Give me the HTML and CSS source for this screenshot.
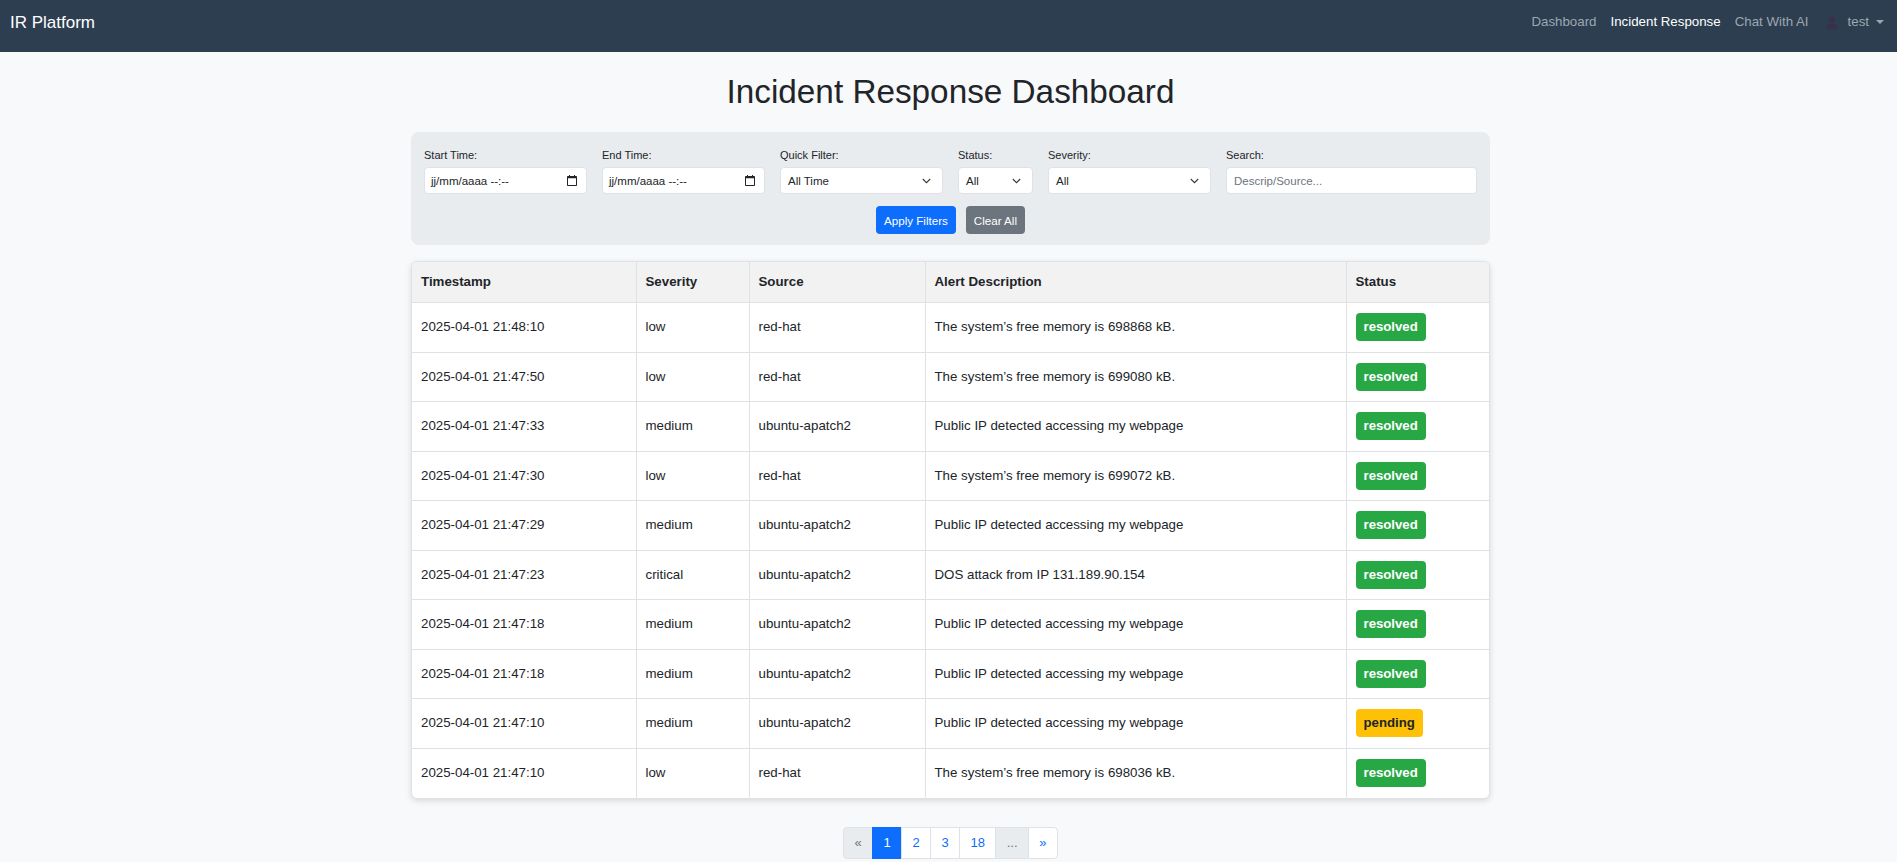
FILE: index.html
```html
<!DOCTYPE html>
<html lang="en">
<head>
<meta charset="utf-8">
<title>Incident Response Dashboard</title>
<link rel="stylesheet" href="styles.css">
</head>
<body>
<nav class="navbar">
  <a class="brand" href="#">IR Platform</a>
  <ul class="nav-links">
    <li><a class="nav-link" href="#">Dashboard</a></li>
    <li><a class="nav-link active" href="#">Incident Response</a></li>
    <li><a class="nav-link" href="#">Chat With AI</a></li>
    <li class="user">
      <svg class="user-icon" width="10" height="13" viewBox="0 0 10 13"><circle cx="5" cy="3.3" r="3.1" fill="#3a2f4d"/><path d="M0 13v-1.6C0 8.9 2 7.4 5 7.4s5 1.5 5 4V13z" fill="#3a2f4d"/></svg>
      <span class="user-name">test</span><span class="caret"></span>
    </li>
  </ul>
</nav>
<div class="page">
  <main class="container">
    <h1 class="title">Incident Response Dashboard</h1>
    <section class="filters">
      <div class="filter-row">
        <div class="field w-std">
          <label>Start Time:</label>
          <div class="control"><span>jj/mm/aaaa --:--</span><svg class="cal" width="10" height="11" viewBox="0 0 10 11"><path d="M2 0h1v1h4V0h1v1h1.2c.4 0 .8.4.8.8v8.4c0 .4-.4.8-.8.8H.8c-.4 0-.8-.4-.8-.8V1.8C0 1.4.4 1 .8 1H2zM1 3.3v6.7h8V3.3z" fill="#212529"/></svg></div>
        </div>
        <div class="field w-std">
          <label>End Time:</label>
          <div class="control"><span>jj/mm/aaaa --:--</span><svg class="cal" width="10" height="11" viewBox="0 0 10 11"><path d="M2 0h1v1h4V0h1v1h1.2c.4 0 .8.4.8.8v8.4c0 .4-.4.8-.8.8H.8c-.4 0-.8-.4-.8-.8V1.8C0 1.4.4 1 .8 1H2zM1 3.3v6.7h8V3.3z" fill="#212529"/></svg></div>
        </div>
        <div class="field w-std">
          <label>Quick Filter:</label>
          <div class="control select"><span>All Time</span><svg class="chev" width="9" height="6" viewBox="0 0 9 6"><path d="M.8 1l3.7 3.7L8.2 1" fill="none" stroke="#343a40" stroke-width="1.1"/></svg></div>
        </div>
        <div class="field w-status">
          <label>Status:</label>
          <div class="control select"><span>All</span><svg class="chev" width="9" height="6" viewBox="0 0 9 6"><path d="M.8 1l3.7 3.7L8.2 1" fill="none" stroke="#343a40" stroke-width="1.1"/></svg></div>
        </div>
        <div class="field w-std">
          <label>Severity:</label>
          <div class="control select"><span>All</span><svg class="chev" width="9" height="6" viewBox="0 0 9 6"><path d="M.8 1l3.7 3.7L8.2 1" fill="none" stroke="#343a40" stroke-width="1.1"/></svg></div>
        </div>
        <div class="field w-grow">
          <label>Search:</label>
          <div class="control"><span class="placeholder">Descrip/Source...</span></div>
        </div>
      </div>
      <div class="actions">
        <button class="btn btn-primary" type="button">Apply Filters</button>
        <button class="btn btn-secondary" type="button">Clear All</button>
      </div>
    </section>

    <div class="table-card">
      <table class="alerts">
        <colgroup>
          <col class="c-time"><col class="c-sev"><col class="c-src"><col class="c-desc"><col class="c-status">
        </colgroup>
        <thead>
          <tr><th>Timestamp</th><th>Severity</th><th>Source</th><th>Alert Description</th><th>Status</th></tr>
        </thead>
        <tbody>
          <tr><td>2025-04-01 21:48:10</td><td>low</td><td>red-hat</td><td>The system’s free memory is 698868 kB.</td><td><span class="badge resolved">resolved</span></td></tr>
          <tr><td>2025-04-01 21:47:50</td><td>low</td><td>red-hat</td><td>The system’s free memory is 699080 kB.</td><td><span class="badge resolved">resolved</span></td></tr>
          <tr><td>2025-04-01 21:47:33</td><td>medium</td><td>ubuntu-apatch2</td><td>Public IP detected accessing my webpage</td><td><span class="badge resolved">resolved</span></td></tr>
          <tr><td>2025-04-01 21:47:30</td><td>low</td><td>red-hat</td><td>The system’s free memory is 699072 kB.</td><td><span class="badge resolved">resolved</span></td></tr>
          <tr><td>2025-04-01 21:47:29</td><td>medium</td><td>ubuntu-apatch2</td><td>Public IP detected accessing my webpage</td><td><span class="badge resolved">resolved</span></td></tr>
          <tr><td>2025-04-01 21:47:23</td><td>critical</td><td>ubuntu-apatch2</td><td>DOS attack from IP 131.189.90.154</td><td><span class="badge resolved">resolved</span></td></tr>
          <tr><td>2025-04-01 21:47:18</td><td>medium</td><td>ubuntu-apatch2</td><td>Public IP detected accessing my webpage</td><td><span class="badge resolved">resolved</span></td></tr>
          <tr><td>2025-04-01 21:47:18</td><td>medium</td><td>ubuntu-apatch2</td><td>Public IP detected accessing my webpage</td><td><span class="badge resolved">resolved</span></td></tr>
          <tr><td>2025-04-01 21:47:10</td><td>medium</td><td>ubuntu-apatch2</td><td>Public IP detected accessing my webpage</td><td><span class="badge pending">pending</span></td></tr>
          <tr><td>2025-04-01 21:47:10</td><td>low</td><td>red-hat</td><td>The system’s free memory is 698036 kB.</td><td><span class="badge resolved">resolved</span></td></tr>
        </tbody>
      </table>
    </div>

    <nav class="pager">
      <ul class="pagination">
        <li class="page-item disabled"><span class="page-link">«</span></li>
        <li class="page-item active"><span class="page-link">1</span></li>
        <li class="page-item"><a class="page-link" href="#">2</a></li>
        <li class="page-item"><a class="page-link" href="#">3</a></li>
        <li class="page-item"><a class="page-link" href="#">18</a></li>
        <li class="page-item disabled"><span class="page-link">...</span></li>
        <li class="page-item"><a class="page-link" href="#">»</a></li>
      </ul>
    </nav>
  </main>
</div>
</body>
</html>
```

FILE: styles.css
```css
* { box-sizing: border-box; }

html, body {
  margin: 0;
  padding: 0;
}

body {
  background: #f8f9fa;
  color: #212529;
  font-family: "Liberation Sans", Arial, sans-serif;
  font-size: 13.3px;
}

a { text-decoration: none; }

/* Navbar */
.navbar {
  height: 52px;
  background: #2c3e50;
  display: flex;
  align-items: flex-start;
  justify-content: space-between;
  padding: 8px 13px 0 10px;
}

.brand {
  color: #ffffff;
  font-size: 17px;
  line-height: 30px;
}

.nav-links {
  list-style: none;
  margin: 0;
  padding: 0;
  display: flex;
  align-items: center;
  height: 28px;
}

.nav-link {
  display: block;
  padding: 0 7px;
  line-height: 28px;
  font-size: 13.3px;
  color: #9ea7b1;
}

.nav-link.active {
  color: #ffffff;
}

.user {
  display: flex;
  align-items: center;
  padding-left: 11px;
  color: #9ea7b1;
  font-size: 13.3px;
  line-height: 28px;
}

.user-icon {
  margin-right: 11px;
}

.caret {
  width: 0;
  height: 0;
  margin-left: 7px;
  border-left: 4px solid transparent;
  border-right: 4px solid transparent;
  border-top: 4.5px solid #9ea7b1;
}

/* Page */
.page {
  padding-left: 4px;
}

.container {
  width: 1079px;
  margin: 0 auto;
}

.title {
  margin: 20px 0 0;
  font-size: 33.3px;
  font-weight: 400;
  line-height: 40px;
  text-align: center;
  color: #212529;
}

/* Filters */
.filters {
  margin-top: 20px;
  background: #e9ecef;
  border-radius: 8px;
  padding: 16px 13px 11px;
}

.filter-row {
  display: flex;
  gap: 15px;
}

.field {
  display: flex;
  flex-direction: column;
}

.w-std { width: 163px; }
.w-status { width: 75px; }
.w-grow { flex: 1; }

.field label {
  font-size: 11px;
  line-height: 15px;
  margin-bottom: 4px;
  color: #212529;
}

.control {
  height: 27px;
  background: #ffffff;
  border: 1px solid #dee2e6;
  border-radius: 4px;
  display: flex;
  align-items: center;
  justify-content: space-between;
  padding: 0 9px 0 6px;
  font-size: 11.5px;
  color: #212529;
}

.control.select {
  padding: 0 11px 0 7px;
}

.placeholder {
  color: #6c757d;
  padding-left: 1px;
}

.actions {
  display: flex;
  justify-content: center;
  gap: 10px;
  margin-top: 12px;
}

.btn {
  height: 28px;
  border: none;
  border-radius: 4px;
  padding: 0 8px;
  font-family: "Liberation Sans", Arial, sans-serif;
  font-size: 11.6px;
  color: #ffffff;
}

.btn-primary { background: #0d6efd; }
.btn-secondary { background: #6c757d; }

/* Table */
.table-card {
  margin-top: 16px;
  background: #ffffff;
  border: 1px solid #dee2e6;
  border-radius: 6px;
  overflow: hidden;
  box-shadow: 0 2px 6px rgba(0, 0, 0, 0.13);
}

.alerts {
  width: 100%;
  border-collapse: collapse;
  table-layout: fixed;
}

.c-time { width: 224px; }
.c-sev { width: 113px; }
.c-src { width: 176px; }
.c-desc { width: 421px; }
.c-status { width: 143px; }

.alerts th,
.alerts td {
  text-align: left;
  padding: 10px 9px;
  border-right: 1px solid #dee2e6;
  border-bottom: 1px solid #dee2e6;
  font-size: 13.3px;
  color: #212529;
  vertical-align: middle;
}

.alerts th:last-child,
.alerts td:last-child {
  border-right: none;
}

.alerts tbody tr:last-child td {
  border-bottom: none;
}

.alerts th {
  background: #f2f2f2;
  font-weight: 700;
  line-height: 20px;
}

.alerts td {
  height: 49.5px;
  line-height: 18px;
}

.badge {
  display: inline-block;
  padding: 0 8px;
  height: 28px;
  line-height: 28px;
  border-radius: 4px;
  font-weight: 700;
  font-size: 13.2px;
}

.badge.resolved {
  background: #28a745;
  color: #ffffff;
}

.badge.pending {
  background: #ffc107;
  color: #212529;
}

/* Pagination */
.pager {
  display: flex;
  justify-content: center;
  margin-top: 28px;
}

.pagination {
  list-style: none;
  margin: 0;
  padding: 0;
  display: flex;
}

.page-link {
  display: block;
  height: 32px;
  line-height: 30px;
  padding: 0 10.4px;
  font-size: 13px;
  color: #0d6efd;
  background: #ffffff;
  border: 1px solid #dee2e6;
  margin-left: -1px;
}

.page-item:first-child .page-link {
  margin-left: 0;
  border-radius: 4px 0 0 4px;
}

.page-item:last-child .page-link {
  border-radius: 0 4px 4px 0;
}

.page-item.active .page-link {
  background: #0d6efd;
  border-color: #0d6efd;
  color: #ffffff;
}

.page-item.disabled .page-link {
  background: #e9ecef;
  color: #6c757d;
}
```
